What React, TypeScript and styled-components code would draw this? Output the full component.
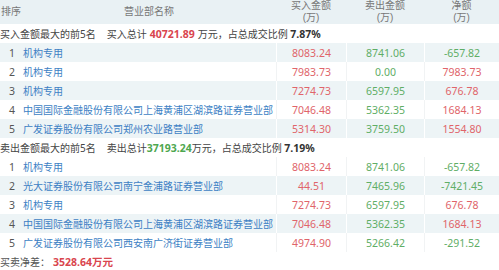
import React from 'react'
import styled, { createGlobalStyle } from 'styled-components'

const GlobalStyle = createGlobalStyle`
  html, body {
    margin: 0;
    padding: 0;
    background: #fff;
  }
  body {
    font-family: "Noto Sans", "Noto Sans CJK SC", sans-serif;
    -webkit-font-smoothing: antialiased;
  }
`

const COLS = '22px 254px 70px 78px 75px'
const RED = '#e0646a'
const GREEN = '#5fae66'
const BLUE = '#3d7fc4'

const Table = styled.div`
  width: 499px;
  height: 270px;
  overflow: hidden;
  font-size: 10px;
  color: #444;
`

const HeaderRow = styled.div`
  display: grid;
  grid-template-columns: ${COLS};
  height: 24px;
  background: #e9f1f4;
  color: #777;
  font-size: 10px;
  font-family: "Liberation Sans", "Noto Sans CJK SC", sans-serif;
`

const HeadCell = styled.div<{ align?: string }>`
  display: flex;
  flex-direction: column;
  justify-content: center;
  align-items: ${({ align }) => align || 'center'};
  line-height: 12px;
  padding-left: ${({ align }) => (align === 'flex-start' ? '1px' : '0')};
`

const Row = styled.div<{ striped?: boolean }>`
  display: grid;
  grid-template-columns: ${COLS};
  height: 19px;
  align-items: center;
  background: ${({ striped }) => (striped ? '#edf4f6' : '#fff')};
  --line: ${({ striped }) => (striped ? '#ffffff' : '#f1f3f4')};
`

const Index = styled.div`
  text-align: center;
  color: #555;
  font-size: 10.5px;
  padding-left: 2px;
`

const Name = styled.div`
  color: ${BLUE};
  white-space: nowrap;
  overflow: visible;
  padding-left: 1px;
`

const Num = styled.div<{ tone: 'red' | 'green' }>`
  height: 100%;
  display: flex;
  align-items: center;
  justify-content: center;
  font-size: 10.5px;
  border-left: 1px solid var(--line);
  color: ${({ tone }) => (tone === 'red' ? RED : GREEN)};
`

const TitleRow = styled.div<{ striped?: boolean }>`
  display: flex;
  align-items: center;
  height: 19px;
  background: ${({ striped }) => (striped ? '#edf4f6' : '#fff')};
  color: #444;
  white-space: nowrap;
`

const TitleLabel = styled.span`
  margin-right: 11px;
`

const Strong = styled.b<{ tone?: 'red' | 'green' | 'dark' }>`
  font-weight: 700;
  font-size: 10.5px;
  color: ${({ tone }) => (tone === 'red' ? '#d9454e' : tone === 'green' ? '#4ea74f' : '#333')};
  margin: 0 ${({ tone }) => (tone === 'red' ? '3px' : '0')};
`

const Footer = styled.div`
  height: 18px;
  display: flex;
  align-items: center;
  color: #555;
`

type Item = { name: string; buy: string; sell: string; net: string }

const buyTop: Item[] = [
  { name: '机构专用', buy: '8083.24', sell: '8741.06', net: '-657.82' },
  { name: '机构专用', buy: '7983.73', sell: '0.00', net: '7983.73' },
  { name: '机构专用', buy: '7274.73', sell: '6597.95', net: '676.78' },
  { name: '中国国际金融股份有限公司上海黄浦区湖滨路证券营业部', buy: '7046.48', sell: '5362.35', net: '1684.13' },
  { name: '广发证券股份有限公司郑州农业路营业部', buy: '5314.30', sell: '3759.50', net: '1554.80' },
]

const sellTop: Item[] = [
  { name: '机构专用', buy: '8083.24', sell: '8741.06', net: '-657.82' },
  { name: '光大证券股份有限公司南宁金浦路证券营业部', buy: '44.51', sell: '7465.96', net: '-7421.45' },
  { name: '机构专用', buy: '7274.73', sell: '6597.95', net: '676.78' },
  { name: '中国国际金融股份有限公司上海黄浦区湖滨路证券营业部', buy: '7046.48', sell: '5362.35', net: '1684.13' },
  { name: '广发证券股份有限公司西安南广济街证券营业部', buy: '4974.90', sell: '5266.42', net: '-291.52' },
]

const Rows = ({ items, offset }: { items: Item[]; offset: number }) => (
  <>
    {items.map((it, i) => (
      <Row key={i} striped={(i + offset) % 2 === 0}>
        <Index>{i + 1}</Index>
        <Name>{it.name}</Name>
        <Num tone="red">{it.buy}</Num>
        <Num tone="green">{it.sell}</Num>
        <Num tone={it.net.startsWith('-') ? 'green' : 'red'}>{it.net}</Num>
      </Row>
    ))}
  </>
)

export default function App() {
  return (
    <Table>
      <GlobalStyle />
      <HeaderRow>
        <HeadCell align="flex-start">排序</HeadCell>
        <HeadCell>营业部名称</HeadCell>
        <HeadCell>
          <span>买入金额</span>
          <span>(万)</span>
        </HeadCell>
        <HeadCell>
          <span>卖出金额</span>
          <span>(万)</span>
        </HeadCell>
        <HeadCell>
          <span>净额</span>
          <span>(万)</span>
        </HeadCell>
      </HeaderRow>

      <TitleRow>
        <TitleLabel>买入金额最大的前5名</TitleLabel>
        买入总计<Strong tone="red">40721.89</Strong>万元，占总成交比例&nbsp;<Strong>7.87%</Strong>
      </TitleRow>
      <Rows items={buyTop} offset={0} />

      <TitleRow>
        <TitleLabel>卖出金额最大的前5名</TitleLabel>
        卖出总计<Strong tone="green">37193.24</Strong>万元，占总成交比例&nbsp;<Strong>7.19%</Strong>
      </TitleRow>
      <Rows items={sellTop} offset={1} />

      <Footer>
        买卖净差：<Strong tone="red">3528.64万元</Strong>
      </Footer>
    </Table>
  )
}
